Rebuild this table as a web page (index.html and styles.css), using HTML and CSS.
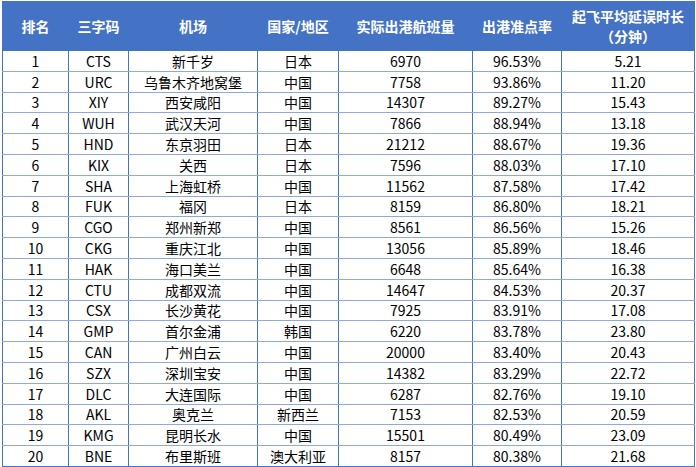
FILE: index.html
```html
<!DOCTYPE html>
<html lang="zh-CN">
<head>
<meta charset="utf-8">
<link rel="stylesheet" href="styles.css">
</head>
<body>
<table class="rank">
<colgroup>
<col class="c1"><col class="c2"><col class="c3"><col class="c4"><col class="c5"><col class="c6"><col class="c7">
</colgroup>
<thead>
<tr><th>排名</th><th>三字码</th><th>机场</th><th>国家/地区</th><th>实际出港航班量</th><th>出港准点率</th><th>起飞平均延误时长<br>（分钟）</th></tr>
</thead>
<tbody>
<tr><td>1</td><td>CTS</td><td>新千岁</td><td>日本</td><td>6970</td><td>96.53%</td><td>5.21</td></tr>
<tr><td>2</td><td>URC</td><td>乌鲁木齐地窝堡</td><td>中国</td><td>7758</td><td>93.86%</td><td>11.20</td></tr>
<tr><td>3</td><td>XIY</td><td>西安咸阳</td><td>中国</td><td>14307</td><td>89.27%</td><td>15.43</td></tr>
<tr><td>4</td><td>WUH</td><td>武汉天河</td><td>中国</td><td>7866</td><td>88.94%</td><td>13.18</td></tr>
<tr><td>5</td><td>HND</td><td>东京羽田</td><td>日本</td><td>21212</td><td>88.67%</td><td>19.36</td></tr>
<tr><td>6</td><td>KIX</td><td>关西</td><td>日本</td><td>7596</td><td>88.03%</td><td>17.10</td></tr>
<tr><td>7</td><td>SHA</td><td>上海虹桥</td><td>中国</td><td>11562</td><td>87.58%</td><td>17.42</td></tr>
<tr><td>8</td><td>FUK</td><td>福冈</td><td>日本</td><td>8159</td><td>86.80%</td><td>18.21</td></tr>
<tr><td>9</td><td>CGO</td><td>郑州新郑</td><td>中国</td><td>8561</td><td>86.56%</td><td>15.26</td></tr>
<tr><td>10</td><td>CKG</td><td>重庆江北</td><td>中国</td><td>13056</td><td>85.89%</td><td>18.46</td></tr>
<tr><td>11</td><td>HAK</td><td>海口美兰</td><td>中国</td><td>6648</td><td>85.64%</td><td>16.38</td></tr>
<tr><td>12</td><td>CTU</td><td>成都双流</td><td>中国</td><td>14647</td><td>84.53%</td><td>20.37</td></tr>
<tr><td>13</td><td>CSX</td><td>长沙黄花</td><td>中国</td><td>7925</td><td>83.91%</td><td>17.08</td></tr>
<tr><td>14</td><td>GMP</td><td>首尔金浦</td><td>韩国</td><td>6220</td><td>83.78%</td><td>23.80</td></tr>
<tr><td>15</td><td>CAN</td><td>广州白云</td><td>中国</td><td>20000</td><td>83.40%</td><td>20.43</td></tr>
<tr><td>16</td><td>SZX</td><td>深圳宝安</td><td>中国</td><td>14382</td><td>83.29%</td><td>22.72</td></tr>
<tr><td>17</td><td>DLC</td><td>大连国际</td><td>中国</td><td>6287</td><td>82.76%</td><td>19.10</td></tr>
<tr><td>18</td><td>AKL</td><td>奥克兰</td><td>新西兰</td><td>7153</td><td>82.53%</td><td>20.59</td></tr>
<tr><td>19</td><td>KMG</td><td>昆明长水</td><td>中国</td><td>15501</td><td>80.49%</td><td>23.09</td></tr>
<tr><td>20</td><td>BNE</td><td>布里斯班</td><td>澳大利亚</td><td>8157</td><td>80.38%</td><td>21.68</td></tr>
</tbody>
</table>
</body>
</html>
```
FILE: styles.css
```css
html, body {
  margin: 0;
  padding: 0;
  background: #ffffff;
}
body {
  padding: 1px 0 0 2px;
  font-family: "Noto Sans CJK SC", "Microsoft YaHei", sans-serif;
}
.rank {
  border-collapse: collapse;
  table-layout: fixed;
  width: 692px;
  font-size: 14px;
  color: #000;
}
.c1 { width: 66px; }
.c2 { width: 60px; }
.c3 { width: 129px; }
.c4 { width: 81px; }
.c5 { width: 134px; }
.c6 { width: 89px; }
.c7 { width: 133px; }
.rank th {
  background: #4472c4;
  color: #fff;
  font-weight: bold;
  height: 48px;
  padding: 0;
  line-height: 20px;
  border: 1px solid #4472c4;
  text-align: center;
  vertical-align: middle;
}
.rank td {
  height: 20.8px;
  padding: 0;
  line-height: 18px;
  text-align: center;
  vertical-align: middle;
  border-left: 1px solid #4472c4;
  border-right: 1px solid #4472c4;
  border-bottom: 1px solid #8ea9db;
  box-sizing: border-box;
}
.rank tbody tr:last-child td {
  border-bottom-color: #4472c4;
}
```
